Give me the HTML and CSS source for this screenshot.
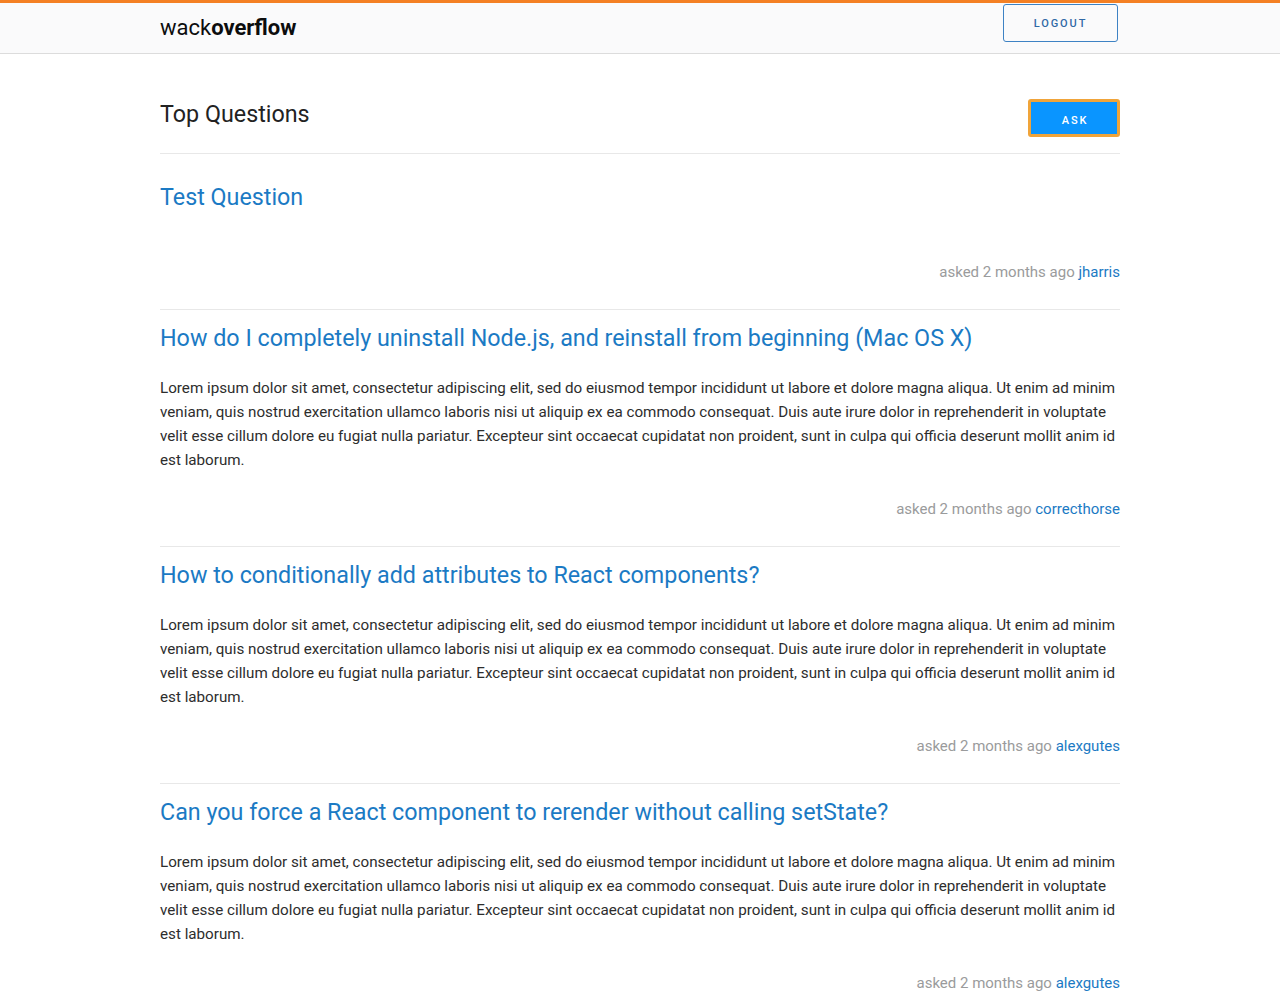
FILE: index.html
```html
<!DOCTYPE html>
<html lang="en">
<head>
<meta charset="utf-8">
<title>wackoverflow</title>
<link rel="stylesheet" href="styles.css">
</head>
<body>
<header class="topbar">
  <div class="container topbar-inner">
    <a class="logo" href="#">wack<b>overflow</b></a>
    <button class="btn-outline">Logout</button>
  </div>
</header>
<main class="container">
  <div class="page-head">
    <h1 class="page-title">Top Questions</h1>
    <button class="btn-ask">Ask</button>
  </div>
  <ul class="questions">
    <li class="question">
      <a class="q-title" href="#">Test Question</a>
      <p class="q-body"></p>
      <div class="q-meta">asked 2 months ago <a href="#">jharris</a></div>
    </li>
    <li class="question">
      <a class="q-title" href="#">How do I completely uninstall Node.js, and reinstall from beginning (Mac OS X)</a>
      <p class="q-body">Lorem ipsum dolor sit amet, consectetur adipiscing elit, sed do eiusmod tempor incididunt ut labore et dolore magna aliqua. Ut enim ad minim veniam, quis nostrud exercitation ullamco laboris nisi ut aliquip ex ea commodo consequat. Duis aute irure dolor in reprehenderit in voluptate velit esse cillum dolore eu fugiat nulla pariatur. Excepteur sint occaecat cupidatat non proident, sunt in culpa qui officia deserunt mollit anim id est laborum.</p>
      <div class="q-meta">asked 2 months ago <a href="#">correcthorse</a></div>
    </li>
    <li class="question">
      <a class="q-title" href="#">How to conditionally add attributes to React components?</a>
      <p class="q-body">Lorem ipsum dolor sit amet, consectetur adipiscing elit, sed do eiusmod tempor incididunt ut labore et dolore magna aliqua. Ut enim ad minim veniam, quis nostrud exercitation ullamco laboris nisi ut aliquip ex ea commodo consequat. Duis aute irure dolor in reprehenderit in voluptate velit esse cillum dolore eu fugiat nulla pariatur. Excepteur sint occaecat cupidatat non proident, sunt in culpa qui officia deserunt mollit anim id est laborum.</p>
      <div class="q-meta">asked 2 months ago <a href="#">alexgutes</a></div>
    </li>
    <li class="question">
      <a class="q-title" href="#">Can you force a React component to rerender without calling setState?</a>
      <p class="q-body">Lorem ipsum dolor sit amet, consectetur adipiscing elit, sed do eiusmod tempor incididunt ut labore et dolore magna aliqua. Ut enim ad minim veniam, quis nostrud exercitation ullamco laboris nisi ut aliquip ex ea commodo consequat. Duis aute irure dolor in reprehenderit in voluptate velit esse cillum dolore eu fugiat nulla pariatur. Excepteur sint occaecat cupidatat non proident, sunt in culpa qui officia deserunt mollit anim id est laborum.</p>
      <div class="q-meta">asked 2 months ago <a href="#">alexgutes</a></div>
    </li>
  </ul>
</main>
</body>
</html>
```
FILE: styles.css
```css
* { box-sizing: border-box; }
html, body { margin: 0; padding: 0; }
body {
  font-family: Roboto, "Liberation Sans", sans-serif;
  color: #242729;
  background: #fff;
}
a { text-decoration: none; }
.container {
  width: 960px;
  margin: 0 auto;
}
.topbar {
  border-top: 3px solid #f48024;
  background: #fafafb;
  border-bottom: 1px solid #dcdcdc;
  height: 54px;
}
.topbar-inner {
  display: flex;
  align-items: flex-start;
  justify-content: space-between;
  padding-top: 1px;
}
.logo {
  font-size: 22px;
  line-height: 26px;
  color: #0c0d0e;
  margin-top: 11px;
}
.logo b { font-weight: 700; }
.btn-outline {
  width: 115px;
  height: 38px;
  margin-right: 2px;
  background: transparent;
  border: 1px solid #3d82c4;
  border-radius: 3px;
  color: #3069a6;
  font-family: Roboto, sans-serif;
  font-size: 11px;
  font-weight: 500;
  letter-spacing: 1.9px;
  text-transform: uppercase;
  padding: 0;
}
.page-head {
  display: flex;
  align-items: center;
  justify-content: space-between;
  padding-top: 45px;
  padding-bottom: 16px;
  border-bottom: 1px solid #e8e8e8;
}
.page-title {
  margin: 0;
  font-size: 23.3px;
  font-weight: 400;
  line-height: 30px;
  color: #222;
  margin-top: -8px;
}
.btn-ask {
  width: 92px;
  height: 38px;
  background: #0a95ff;
  border: 3px solid #f0a43a;
  border-radius: 3px;
  color: #fff;
  font-family: Roboto, sans-serif;
  font-size: 11px;
  font-weight: 500;
  letter-spacing: 1.8px;
  text-transform: uppercase;
  padding: 5px 0 0 2px;
}
.questions {
  list-style: none;
  margin: 15px 0 0;
  padding: 0;
}
.question {
  display: flex;
  flex-direction: column;
  gap: 24px;
  padding: 14px 0 25px;
  border-bottom: 1px solid #e8e8e8;
}
.q-title {
  font-size: 23.3px;
  line-height: 28px;
  color: #1b7ac4;
}
.q-body {
  margin: 0;
  font-size: 15.2px;
  line-height: 24px;
  color: #2d2d2d;
}
.q-meta {
  align-self: flex-end;
  margin-top: 1px;
  font-size: 15px;
  line-height: 24px;
  color: #9a9b9c;
}
.q-meta a { color: #1b7ac4; }
```
